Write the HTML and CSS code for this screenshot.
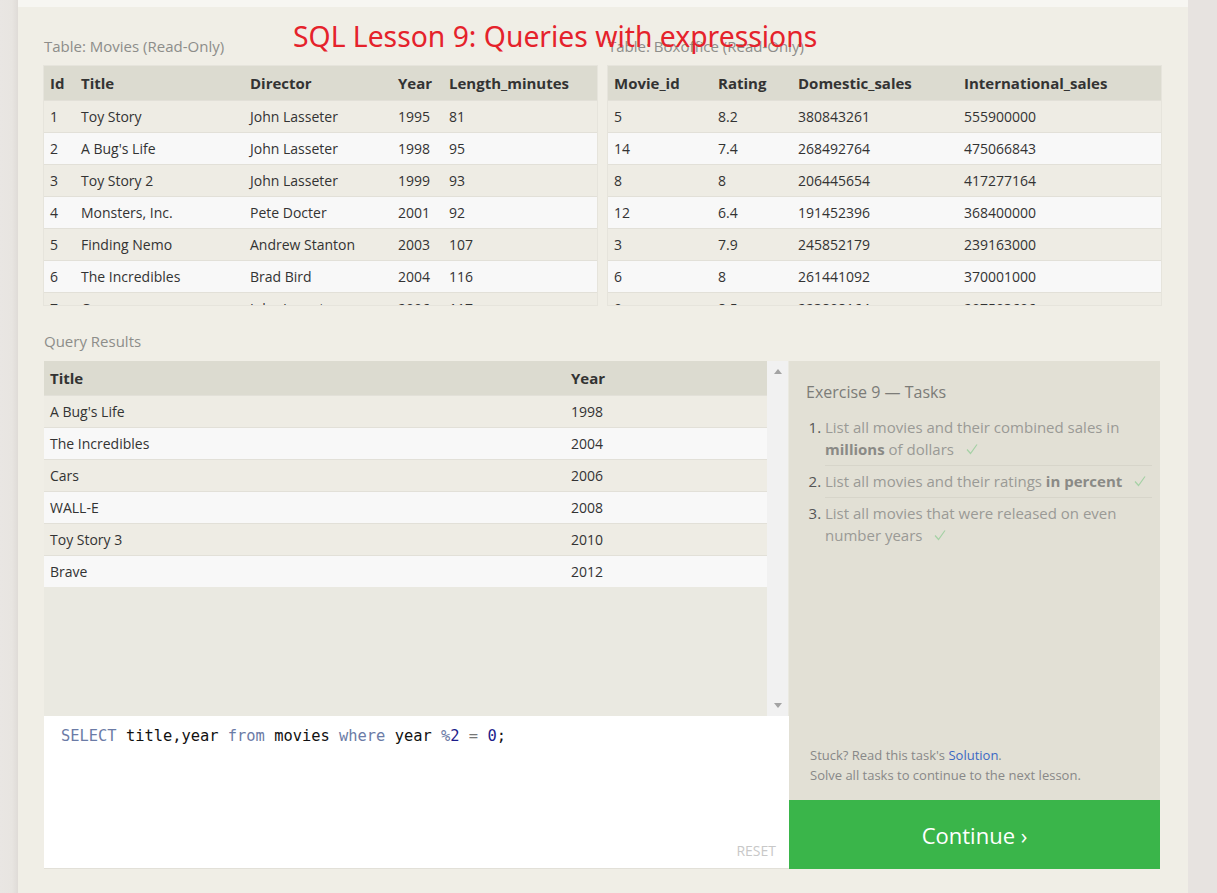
FILE: index.html
```html
<!DOCTYPE html>
<html lang="en">
<head>
<meta charset="utf-8">
<title>SQL Lesson 9: Queries with expressions</title>
<link rel="stylesheet" href="styles.css">
</head>
<body>
<div class="page">
  <div class="gutter-left"></div>
  <main class="card">
    <div class="topband"></div>
    <h1 class="lesson-title">SQL Lesson 9: Queries with expressions</h1>
    <div class="content">
      <div class="tables">
        <section class="tbl-block">
          <div class="caption">Table: Movies (Read-Only)</div>
          <div class="tbl-scroll">
            <table class="data">
              <colgroup><col style="width:31px"><col style="width:169px"><col style="width:148px"><col style="width:51px"><col style="width:154px"></colgroup>
              <thead><tr><th>Id</th><th>Title</th><th>Director</th><th>Year</th><th>Length_minutes</th></tr></thead>
              <tbody>
                <tr><td>1</td><td>Toy Story</td><td>John Lasseter</td><td>1995</td><td>81</td></tr>
                <tr><td>2</td><td>A Bug's Life</td><td>John Lasseter</td><td>1998</td><td>95</td></tr>
                <tr><td>3</td><td>Toy Story 2</td><td>John Lasseter</td><td>1999</td><td>93</td></tr>
                <tr><td>4</td><td>Monsters, Inc.</td><td>Pete Docter</td><td>2001</td><td>92</td></tr>
                <tr><td>5</td><td>Finding Nemo</td><td>Andrew Stanton</td><td>2003</td><td>107</td></tr>
                <tr><td>6</td><td>The Incredibles</td><td>Brad Bird</td><td>2004</td><td>116</td></tr>
                <tr><td>7</td><td>Cars</td><td>John Lasseter</td><td>2006</td><td>117</td></tr>
                <tr><td>8</td><td>Ratatouille</td><td>Brad Bird</td><td>2007</td><td>115</td></tr>
              </tbody>
            </table>
          </div>
        </section>
        <section class="tbl-block">
          <div class="caption">Table: Boxoffice (Read-Only)</div>
          <div class="tbl-scroll">
            <table class="data">
              <colgroup><col style="width:104px"><col style="width:80px"><col style="width:166px"><col style="width:203px"></colgroup>
              <thead><tr><th>Movie_id</th><th>Rating</th><th>Domestic_sales</th><th>International_sales</th></tr></thead>
              <tbody>
                <tr><td>5</td><td>8.2</td><td>380843261</td><td>555900000</td></tr>
                <tr><td>14</td><td>7.4</td><td>268492764</td><td>475066843</td></tr>
                <tr><td>8</td><td>8</td><td>206445654</td><td>417277164</td></tr>
                <tr><td>12</td><td>6.4</td><td>191452396</td><td>368400000</td></tr>
                <tr><td>3</td><td>7.9</td><td>245852179</td><td>239163000</td></tr>
                <tr><td>6</td><td>8</td><td>261441092</td><td>370001000</td></tr>
                <tr><td>9</td><td>8.5</td><td>223808164</td><td>297503696</td></tr>
                <tr><td>11</td><td>8.4</td><td>415004880</td><td>648167031</td></tr>
              </tbody>
            </table>
          </div>
        </section>
      </div>

      <div class="caption results-caption">Query Results</div>
      <div class="workspace">
        <div class="left-col">
          <div class="results">
            <div class="results-table">
              <table class="data">
                <colgroup><col style="width:521px"><col style="width:202px"></colgroup>
                <thead><tr><th>Title</th><th>Year</th></tr></thead>
                <tbody>
                  <tr><td>A Bug's Life</td><td>1998</td></tr>
                  <tr><td>The Incredibles</td><td>2004</td></tr>
                  <tr><td>Cars</td><td>2006</td></tr>
                  <tr><td>WALL-E</td><td>2008</td></tr>
                  <tr><td>Toy Story 3</td><td>2010</td></tr>
                  <tr><td>Brave</td><td>2012</td></tr>
                </tbody>
              </table>
            </div>
            <div class="scrollbar">
              <span class="arrow arrow-up"></span>
              <span class="arrow arrow-down"></span>
            </div>
          </div>
          <div class="editor">
            <pre class="code"><span class="kw">SELECT</span> title,year <span class="kw">from</span> movies <span class="kw">where</span> year <span class="kw">%</span><span class="num">2</span> <span class="op">=</span> <span class="num">0</span>;</pre>
            <span class="reset">RESET</span>
          </div>
        </div>
        <div class="right-col">
          <div class="tasks">
            <h2 class="tasks-title">Exercise 9 — Tasks</h2>
            <ol class="task-list">
              <li>List all movies and their combined sales in <b>millions</b> of dollars <svg class="check" viewBox="0 0 14 14" width="14" height="14"><polyline points="2,7.5 5.5,11.5 12,2.5" fill="none" stroke="#a5d1a5" stroke-width="1.2"/></svg></li>
              <li>List all movies and their ratings <b>in percent</b> <svg class="check" viewBox="0 0 14 14" width="14" height="14"><polyline points="2,7.5 5.5,11.5 12,2.5" fill="none" stroke="#a5d1a5" stroke-width="1.2"/></svg></li>
              <li>List all movies that were released on even number years <svg class="check" viewBox="0 0 14 14" width="14" height="14"><polyline points="2,7.5 5.5,11.5 12,2.5" fill="none" stroke="#a5d1a5" stroke-width="1.2"/></svg></li>
            </ol>
            <div class="stuck">
              <p>Stuck? Read this task's <a href="#">Solution</a>.</p>
              <p>Solve all tasks to continue to the next lesson.</p>
            </div>
          </div>
          <a class="continue" href="#">Continue ›</a>
        </div>
      </div>
    </div>
  </main>
  <div class="gutter-right"></div>
</div>
</body>
</html>
```

FILE: styles.css
```css
* { box-sizing: border-box; }

html, body {
  margin: 0;
  padding: 0;
}

body {
  font-family: "Open Sans", "Liberation Sans", sans-serif;
  background: #e7e3e0;
  color: #333;
}

.page {
  display: flex;
  width: 1217px;
  height: 893px;
  overflow: hidden;
}

.gutter-left {
  width: 18px;
  flex: none;
  background: linear-gradient(to right, #e9e6e3 0, #e8e5e1 12px, #dfdbd7 18px);
}

.gutter-right {
  flex: 1;
  background: #e7e3e0;
}

.card {
  width: 1170px;
  flex: none;
  background: #f0eee6;
  position: relative;
}

.topband {
  height: 7px;
  background: #f7f6f2;
}

.lesson-title {
  position: absolute;
  left: 275px;
  top: 16px;
  margin: 0;
  font-family: "Noto Sans", "Open Sans", sans-serif;
  font-weight: 400;
  font-size: 28.3px;
  line-height: 40px;
  color: #e5222b;
  white-space: nowrap;
  z-index: 2;
}

.content {
  padding: 29px 27px 0 26px;
}

.tables {
  display: grid;
  grid-template-columns: 553px 553px;
  column-gap: 11px;
}

.caption {
  font-size: 15px;
  line-height: 20px;
  color: #8d8d8a;
  margin-bottom: 10px;
}

.results-caption {
  margin-top: 26px;
}

.tbl-scroll {
  height: 239px;
  overflow: hidden;
  box-shadow: 0 0 0 1px #e6e4dc;
}

table.data {
  width: 100%;
  table-layout: fixed;
  border-collapse: separate;
  border-spacing: 0;
}

table.data th {
  height: 34px;
  padding: 0 6px;
  background: #dcdbd0;
  font-size: 15px;
  font-weight: 700;
  text-align: left;
  color: #333;
  white-space: nowrap;
}

table.data td {
  height: 32px;
  padding: 0 6px;
  font-size: 14px;
  color: #333;
  border-top: 1px solid #e2e0d8;
  white-space: nowrap;
}

table.data tbody tr:nth-child(odd) td { background: #eeece4; }
table.data tbody tr:nth-child(even) td { background: #f8f8f8; }

.workspace {
  display: flex;
  height: 508px;
}

.left-col {
  width: 745px;
  display: flex;
  flex-direction: column;
}

.results {
  height: 355px;
  display: flex;
  background: #eae9e1;
}

.results-table {
  width: 723px;
  overflow: hidden;
}

.scrollbar {
  width: 21px;
  background: #f1f1f1;
  display: flex;
  flex-direction: column;
  justify-content: space-between;
  align-items: center;
  padding: 8px 0 8px;
}

.arrow {
  width: 0;
  height: 0;
  border-left: 4px solid transparent;
  border-right: 4px solid transparent;
}
.arrow-up { border-bottom: 5px solid #a3a3a3; }
.arrow-down { border-top: 5px solid #a3a3a3; }

.editor {
  flex: 1;
  background: #fff;
  position: relative;
  padding: 10px 17px;
  border-bottom: 1px solid #e2e0d8;
}

.code {
  margin: 0;
  font-family: "DejaVu Sans Mono", "Liberation Mono", monospace;
  font-size: 15.4px;
  line-height: 20px;
  color: #111;
}

.code .kw { color: #6b7ba6; }
.code .num { color: #1d1d8a; }
.code .op { color: #777; }

.reset {
  position: absolute;
  right: 13px;
  bottom: 8px;
  font-size: 14px;
  line-height: 18px;
  color: #c8c8c8;
}

.right-col {
  width: 371px;
  display: flex;
  flex-direction: column;
}

.tasks {
  flex: 1;
  background: #e2e0d5;
  padding: 20px 8px 15px 17px;
  display: flex;
  flex-direction: column;
}

.tasks-title {
  margin: 0;
  font-size: 16px;
  line-height: 22px;
  font-weight: 400;
  color: #7c7c78;
}

.task-list {
  margin: 9px 0 0;
  padding: 0 0 0 19px;
  font-size: 15px;
  line-height: 22px;
  color: #9a9a96;
}

.task-list li {
  padding: 4px 0 5px;
  border-bottom: 1px solid #d7d5ca;
}

.task-list li:last-child { border-bottom: none; }

.task-list li::marker { color: #555; }

.task-list b {
  font-weight: 700;
  color: #8a8a86;
}

.check {
  vertical-align: -1px;
  margin-left: 7px;
}

.stuck {
  margin-top: auto;
  font-size: 13px;
  line-height: 20px;
  color: #888;
  padding-left: 4px;
}

.stuck p { margin: 0; }

.stuck a {
  color: #3b68c4;
  text-decoration: none;
}

.continue {
  height: 69px;
  flex: none;
  background: #3ab54a;
  color: #fff;
  font-size: 22px;
  text-decoration: none;
  display: flex;
  align-items: center;
  justify-content: center;
}
```
